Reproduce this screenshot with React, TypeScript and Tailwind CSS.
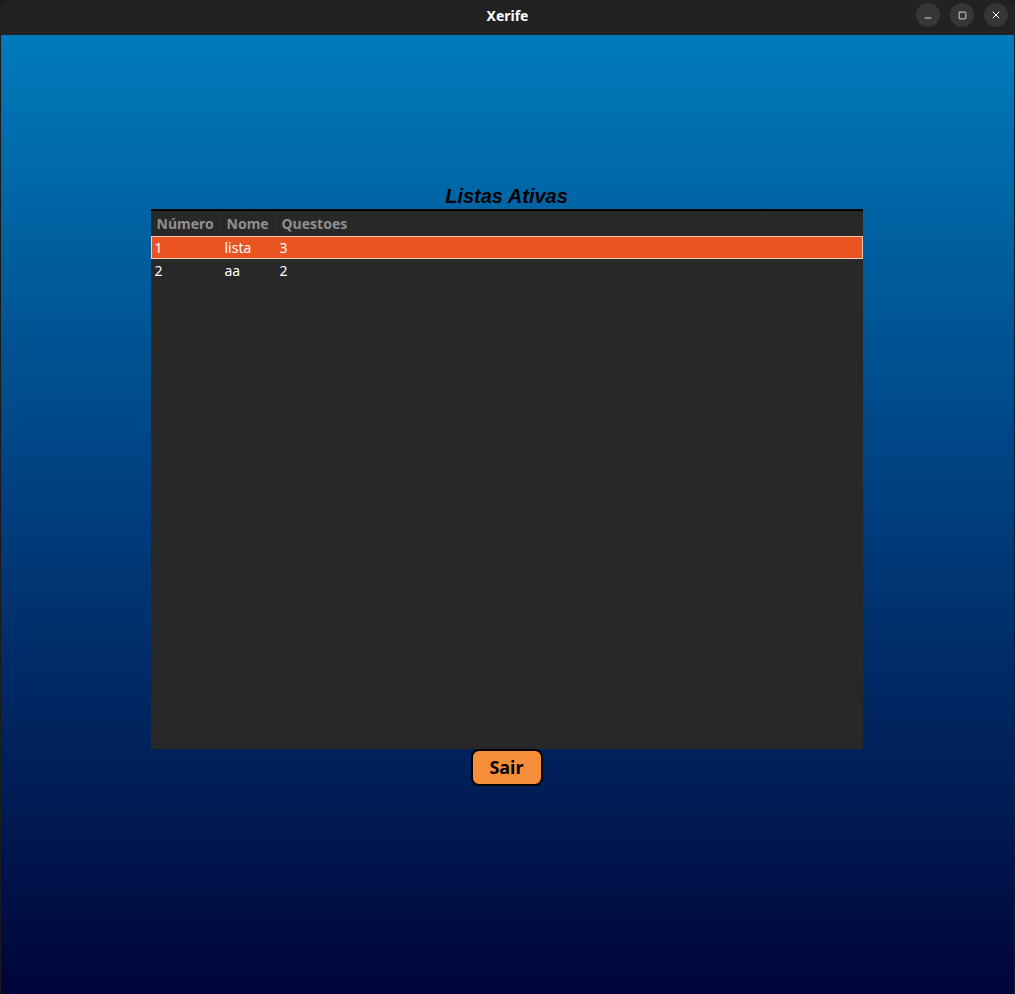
import { Minus, Square, X } from 'lucide-react';

interface Lista {
  numero: number;
  nome: string;
  questoes: number;
}

const listas: Lista[] = [
  { numero: 1, nome: 'lista', questoes: 3 },
  { numero: 2, nome: 'aa', questoes: 2 },
];

function TitleBar() {
  return (
    <div className="relative flex h-[35px] items-center justify-center pb-[4px] bg-[#222222] rounded-t-[10px]">
      <span className="text-[14px] font-bold text-white font-['Noto_Sans',sans-serif]">Xerife</span>
      <div className="absolute right-[7px] top-[3px] flex gap-[10px]">
        <button className="flex h-[24px] w-[24px] items-center justify-center rounded-full bg-[#363636] text-white">
          <Minus size={10} strokeWidth={2} className="mt-[5px]" />
        </button>
        <button className="flex h-[24px] w-[24px] items-center justify-center rounded-full bg-[#363636] text-white">
          <Square size={9} strokeWidth={2} />
        </button>
        <button className="flex h-[24px] w-[24px] items-center justify-center rounded-full bg-[#363636] text-white">
          <X size={12} strokeWidth={2} />
        </button>
      </div>
    </div>
  );
}

function ListasTable() {
  return (
    <div className="w-[712px] h-[540px] bg-[#282828] border-t-2 border-black font-['Noto_Sans',sans-serif] text-[14px]">
      <div className="flex h-[25px] items-center font-bold text-[#8f8f8f]">
        <div className="w-[70px] h-full flex items-center pl-[6px] border-r border-[#2e2e2e]">Número</div>
        <div className="w-[55px] h-full flex items-center pl-[6px] border-r border-[#2e2e2e]">Nome</div>
        <div className="flex-1 h-full flex items-center pl-[6px]">Questoes</div>
      </div>
      {listas.map((item, index) => (
        <div
          key={item.numero}
          className={`flex h-[23px] items-center text-white ${
            index === 0 ? 'bg-[#e95420] border border-[#ffc9b5]' : 'border border-transparent'
          }`}
        >
          <div className="w-[70px] pl-[3px]">{item.numero}</div>
          <div className="w-[55px] pl-[3px]">{item.nome}</div>
          <div className="flex-1 pl-[3px]">{item.questoes}</div>
        </div>
      ))}
    </div>
  );
}

export default function App() {
  return (
    <div className="w-[1015px] h-[994px] bg-[#1b1b1b] flex flex-col overflow-hidden">
      <TitleBar />
      <div className="flex-1 mx-[1px] pr-[2px] bg-gradient-to-b from-[#007bbb] via-[#003d7d] to-[#00053a] flex flex-col items-center pt-[149px]">
        <h1 className="text-[20px] font-bold italic text-black leading-[25px] font-['Liberation_Sans',Arial,sans-serif]">
          Listas Ativas
        </h1>
        <ListasTable />
        <button className="w-[72px] h-[37px] rounded-[8px] border-2 border-black bg-[#f58d39] text-[18px] font-bold text-black font-['Noto_Sans',sans-serif]">
          Sair
        </button>
      </div>
    </div>
  );
}
